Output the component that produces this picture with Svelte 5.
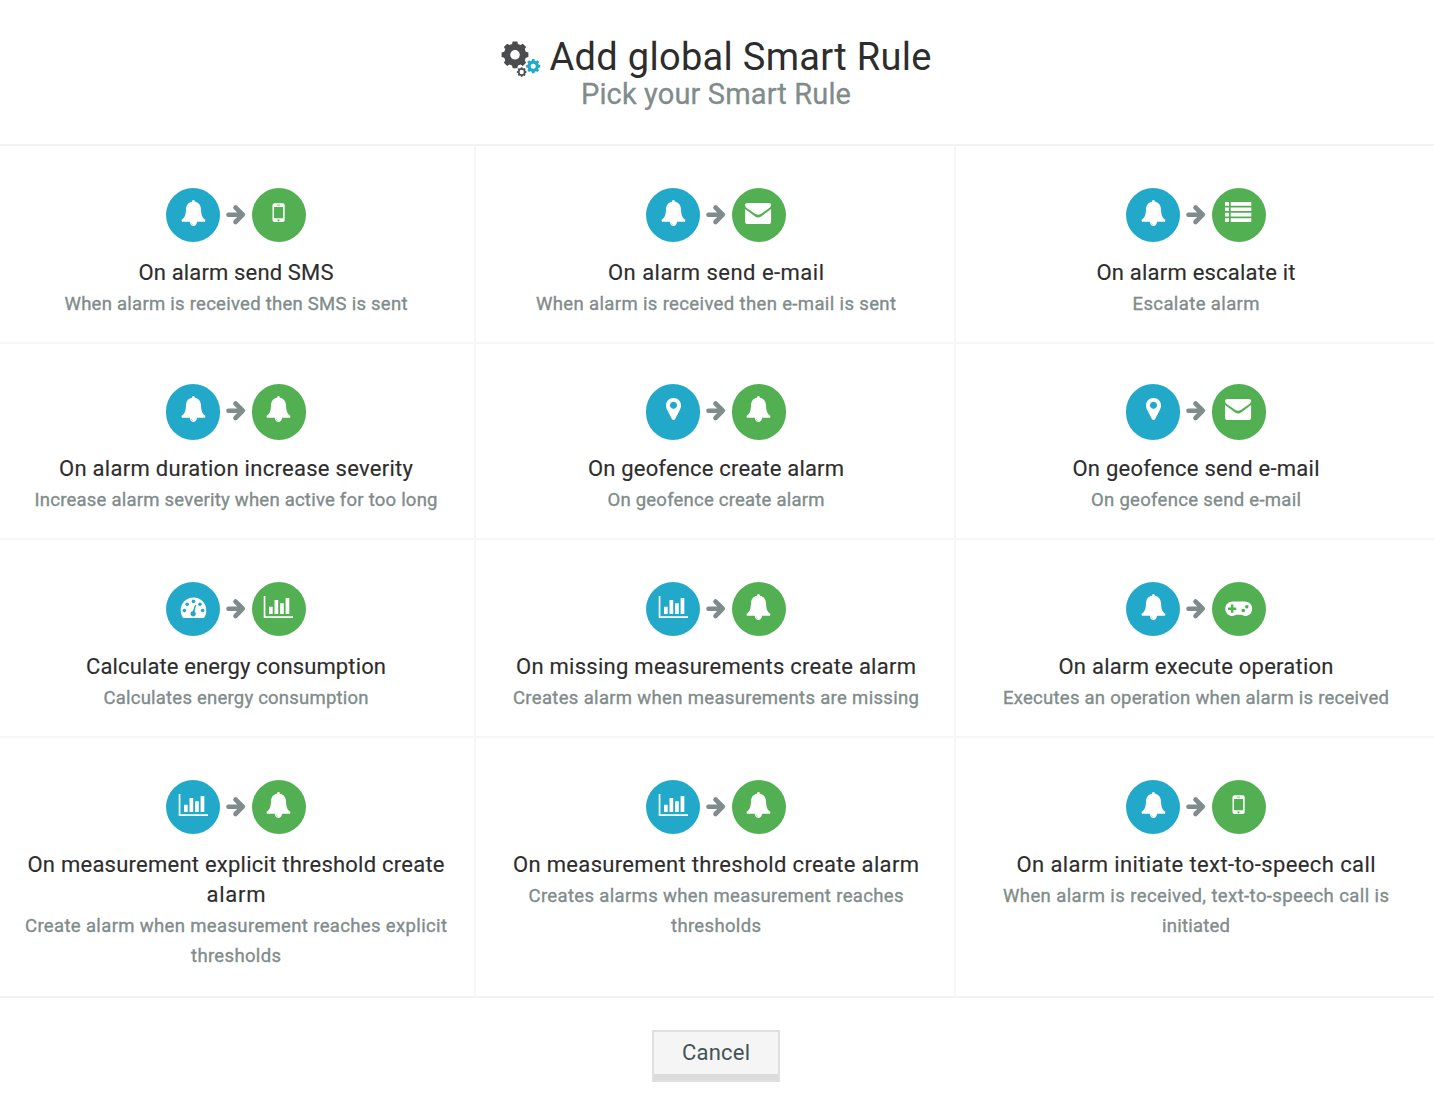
<script>
  // Each text line is [text, set width in px].
  const rules = [
    { from: 'bell', to: 'phone', title: [['On alarm send SMS', 195]], sub: [['When alarm is received then SMS is sent', 343]] },
    { from: 'bell', to: 'mail', title: [['On alarm send e-mail', 216]], sub: [['When alarm is received then e-mail is sent', 360]] },
    { from: 'bell', to: 'list', title: [['On alarm escalate it', 199]], sub: [['Escalate alarm', 127]] },
    { from: 'bell', to: 'bell', title: [['On alarm duration increase severity', 354]], sub: [['Increase alarm severity when active for too long', 403]] },
    { from: 'pin', to: 'bell', title: [['On geofence create alarm', 256]], sub: [['On geofence create alarm', 217]] },
    { from: 'pin', to: 'mail', title: [['On geofence send e-mail', 247]], sub: [['On geofence send e-mail', 210]] },
    { from: 'gauge', to: 'chart', title: [['Calculate energy consumption', 300]], sub: [['Calculates energy consumption', 265]] },
    { from: 'chart', to: 'bell', title: [['On missing measurements create alarm', 400]], sub: [['Creates alarm when measurements are missing', 406]] },
    { from: 'bell', to: 'pad', title: [['On alarm execute operation', 275]], sub: [['Executes an operation when alarm is received', 386]] },
    { from: 'chart', to: 'bell', title: [['On measurement explicit threshold create', 417], ['alarm', 59]], sub: [['Create alarm when measurement reaches explicit', 422], ['thresholds', 90]] },
    { from: 'chart', to: 'bell', title: [['On measurement threshold create alarm', 406]], sub: [['Creates alarms when measurement reaches', 375], ['thresholds', 90]] },
    { from: 'bell', to: 'phone', title: [['On alarm initiate text-to-speech call', 359]], sub: [['When alarm is received, text-to-speech call is', 386], ['initiated', 68]] },
  ];

  // Tracks the line out (or in) so it fills its set width.
  function fit(node, width) {
    const n = node.textContent.length;
    const spacing = (width - node.getBoundingClientRect().width) / (n - 1);
    node.style.letterSpacing = `${spacing}px`;
    node.style.marginRight = `${-spacing}px`;
  }

  function gear(cx, cy, outer, inner, hole) {
    const pts = [];
    for (let i = 0; i < 8; i++) {
      const a = (i * Math.PI) / 4;
      for (const [d, r] of [[-0.27, inner], [-0.17, outer], [0.17, outer], [0.27, inner]]) {
        pts.push(`${(cx + r * Math.sin(a + d)).toFixed(2)} ${(cy - r * Math.cos(a + d)).toFixed(2)}`);
      }
    }
    return `M${pts.join('L')}ZM${cx - hole} ${cy}a${hole} ${hole} 0 1 0 ${2 * hole} 0a${hole} ${hole} 0 1 0 ${-2 * hole} 0Z`;
  }
</script>

{#snippet icon(name)}
  <svg class={name} width="54" height="54" viewBox="0 0 54 54" fill="#fff">
    {#if name === 'bell'}
      <path d="M27.400 12c1 0 1.500.7 1.500 1.800 3.700.7 5.900 3.400 6.100 7.400.3 5.500 1 8.300 4.300 10.600.2.9-.1 1.900-.7 1.900H31c-.1 2.500-1.700 4.300-3.600 4.300s-3.500-1.800-3.600-4.300h-7.500c-.6 0-.9-1-.7-1.900 3.400-2.300 4.100-5.100 4.400-10.600.2-4 2.300-6.700 6-7.400 0-1.100.5-1.800 1.400-1.800z" />
      <path class="cut" d="M25.200 34.600c.1 1.300.8 2.100 2 2.300" />
    {:else if name === 'phone'}
      <path fill-rule="evenodd" d="M22.500 15.300h8.200a2 2 0 0 1 2 2v14.700a2 2 0 0 1-2 2h-8.200a2 2 0 0 1-2-2V17.300a2 2 0 0 1 2-2zM22 19v11.300h9V19zM25 16.700v.7h3.200v-.7zM26.500 31.200a1 1 0 1 0 .01 0z" />
    {:else if name === 'mail'}
      <path d="M15.300 15h21.500c1.400 0 2.300.9 2.300 2.200-.1 1.500-1.500 2.500-2.800 3.500l-7.600 5.200c-1.600 1-3.700 1-5.300 0l-7.600-5.200c-1.600-1.100-2.600-2-2.700-3.500 0-1.300.9-2.200 2.200-2.200z" />
      <path d="M13.100 20.900l10 7.500c2 1.300 4 1.300 6 0l10-7.500v12.800c0 1.500-.9 2.300-2.300 2.300H15.300c-1.300 0-2.200-.8-2.200-2.300z" />
    {:else if name === 'list'}
      <path d="M13 14h4v3.700h-4zM18.700 14h20.600v3.700H18.700zM13 19.400h4v3.700h-4zM18.700 19.400h20.600v3.700H18.700zM13 24.800h4v3.700h-4zM18.700 24.800h20.600v3.700H18.700zM13 30.200h4v3.800h-4zM18.700 30.200h20.600v3.800H18.700z" />
    {:else if name === 'pin'}
      <path fill-rule="evenodd" d="M27.500 14c4.300 0 7.500 3.200 7.500 7.300 0 2-.5 3.300-1.200 4.700l-4.700 9.100c-.7 1.300-2.500 1.300-3.200 0L21.200 26c-.7-1.400-1.200-2.700-1.200-4.700 0-4.100 3.200-7.300 7.500-7.300zm0 3.700a3.600 3.600 0 1 0 .01 0z" />
    {:else if name === 'gauge'}
      <path d="M27.500 15.600c7.300 0 12.800 5.700 12.800 12.800 0 2.600-.7 4.900-1.900 6.800-.3.500-.7.700-1.200.7H17.800c-.5 0-.9-.2-1.200-.7a12.700 12.700 0 0 1-1.900-6.800c0-7.100 5.500-12.800 12.800-12.800z" />
      <g class="on-blue">
        <circle cx="18.400" cy="28.500" r="1.800" /><circle cx="21.200" cy="22.200" r="1.800" /><circle cx="27.500" cy="19.400" r="1.800" />
        <circle cx="33.900" cy="22.200" r="1.800" /><circle cx="36.600" cy="28.500" r="1.800" />
        <path d="M28.900 22.900l1.200.3-1.500 6.200a2.700 2.700 0 1 1-1.700-.4z" />
      </g>
    {:else if name === 'chart'}
      <path d="M11.700 14h1.700v20.200H41v1.700H11.700zM17 24.700h3.700v7.400H17zM22.500 18h3.700v14.100h-3.700zM28.100 21.300h3.700v10.800h-3.700zM33.600 16h3.700v16.100h-3.700z" />
    {:else}
      <path d="M20.500 19.500h12.500a7.200 7.200 0 1 1-3.700 13.300h-5.100a7.200 7.200 0 1 1-3.700-13.300z" />
      <path class="on-green" d="M18.900 22.500h2.500v2.900h2.900v2.500h-2.900v2.900h-2.500v-2.900H16v-2.500h2.900zM31.300 26.700a1.800 1.800 0 1 0 .01 0zM34.800 22.900a1.800 1.800 0 1 0 .01 0z" />
    {/if}
  </svg>
{/snippet}

<main>
  <header>
    <h1>
      <svg class="gears" width="42" height="40" viewBox="0 0 42 40" fill-rule="evenodd">
        <path fill="#4b4c4e" d={gear(15, 16.800, 13.600, 11.200, 4.800)} />
        <path fill="#4b4c4e" d={gear(21.700, 34, 4.900, 3.900, 2.200)} />
        <path fill="#22a9c9" d={gear(33.200, 28.200, 7.200, 5.700, 2.500)} />
      </svg>
      <span use:fit={382}>Add global Smart Rule</span>
    </h1>
    <p><span use:fit={270}>Pick your Smart Rule</span></p>
  </header>

  <section>
    {#each rules as rule}
      <article>
        <div class="flow">
          <span class="disc blue">{@render icon(rule.from)}</span>
          <svg class="arrow" width="32" height="54" viewBox="0 0 32 54">
            <path d="M8.500 26.700h13M15.500 19.500l7.300 7.200-7.300 7.300" />
          </svg>
          <span class="disc green">{@render icon(rule.to)}</span>
        </div>
        <h2>{#each rule.title as [text, width]}<div><span use:fit={width}>{text}</span></div>{/each}</h2>
        <div class="sub">{#each rule.sub as [text, width]}<div><span use:fit={width}>{text}</span></div>{/each}</div>
      </article>
    {/each}
  </section>

  <footer><button><span use:fit={68}>Cancel</span></button></footer>
</main>

<style>
  :global(body) { background: #fff; overflow: hidden; }
  main { width: 1434px; height: 1104px; overflow: hidden; font-family: Roboto, "Liberation Sans", sans-serif; }
  span { display: inline-block; white-space: nowrap; }
  header { box-sizing: border-box; height: 146px; padding: 37px 3px 0 0; border-bottom: 2px solid #f2f2f2; }
  h1 { display: flex; justify-content: center; gap: 8px; margin: 0; height: 40px; line-height: 40px; font-size: 38px; font-weight: 400; color: #2d2d2d; }
  .gears { flex: none; margin-top: 1px; }
  header p { margin: 0; padding-left: 1px; text-align: center; font-size: 29px; line-height: 34px; color: #7f8c8b; -webkit-text-stroke: 0.3px #7f8c8b; }
  section { display: grid; grid-template-columns: repeat(3, 480px); grid-template-rows: 198px 196px 198px 260px; margin-left: -4px; }
  article { box-sizing: border-box; padding-top: 42px; border-right: 2px solid #f7f7f7; border-bottom: 2px solid #f7f7f7; text-align: center; }
  article:nth-child(n + 4):nth-child(-n + 6) { padding-top: 40px; }
  article:nth-child(n + 10) { border-bottom-color: #f2f2f2; }
  .flow { display: flex; justify-content: center; height: 54px; padding-left: 2px; }
  .disc { width: 54px; height: 54px; border-radius: 50%; }
  .disc svg { display: block; }
  .green .bell { margin-left: -1px; }
  .blue .chart { margin-left: 1px; }
  article:nth-child(n + 4):nth-child(-n + 6) .disc { height: 56px; border-radius: 27px; }
  .blue { background: #22a9c9; }
  .green { background: #52af52; }
  .on-blue { fill: #22a9c9; }
  .on-green { fill: #52af52; }
  .cut { fill: none; stroke: #7cc9d9; stroke-width: 0.7; }
  .green .cut { stroke: #97cf97; }
  .arrow { fill: none; stroke: #7f8c8b; stroke-width: 4.600; stroke-linecap: round; stroke-linejoin: round; }
  h2, .sub { margin: 0; padding-left: 2px; line-height: 30px; font-weight: 400; }
  h2 div, .sub div { height: 30px; }
  h2 { margin-top: 16px; font-size: 22px; color: #2d2d2d; -webkit-text-stroke: 0.15px #2d2d2d; }
  .sub { margin-top: 1px; font-size: 18.500px; color: #7f8c8b; -webkit-text-stroke: 0.35px #7f8c8b; }
  footer { display: flex; justify-content: center; padding: 32px 2px 0 0; }
  button { box-sizing: border-box; width: 128px; height: 52px; padding: 0 0 8px; border: 2px solid #e0e0e0; border-radius: 0; background: #f5f5f5; box-shadow: inset 0 -6px #dcdcdc; font: 22px Roboto, "Liberation Sans", sans-serif; color: #435456; }
</style>
